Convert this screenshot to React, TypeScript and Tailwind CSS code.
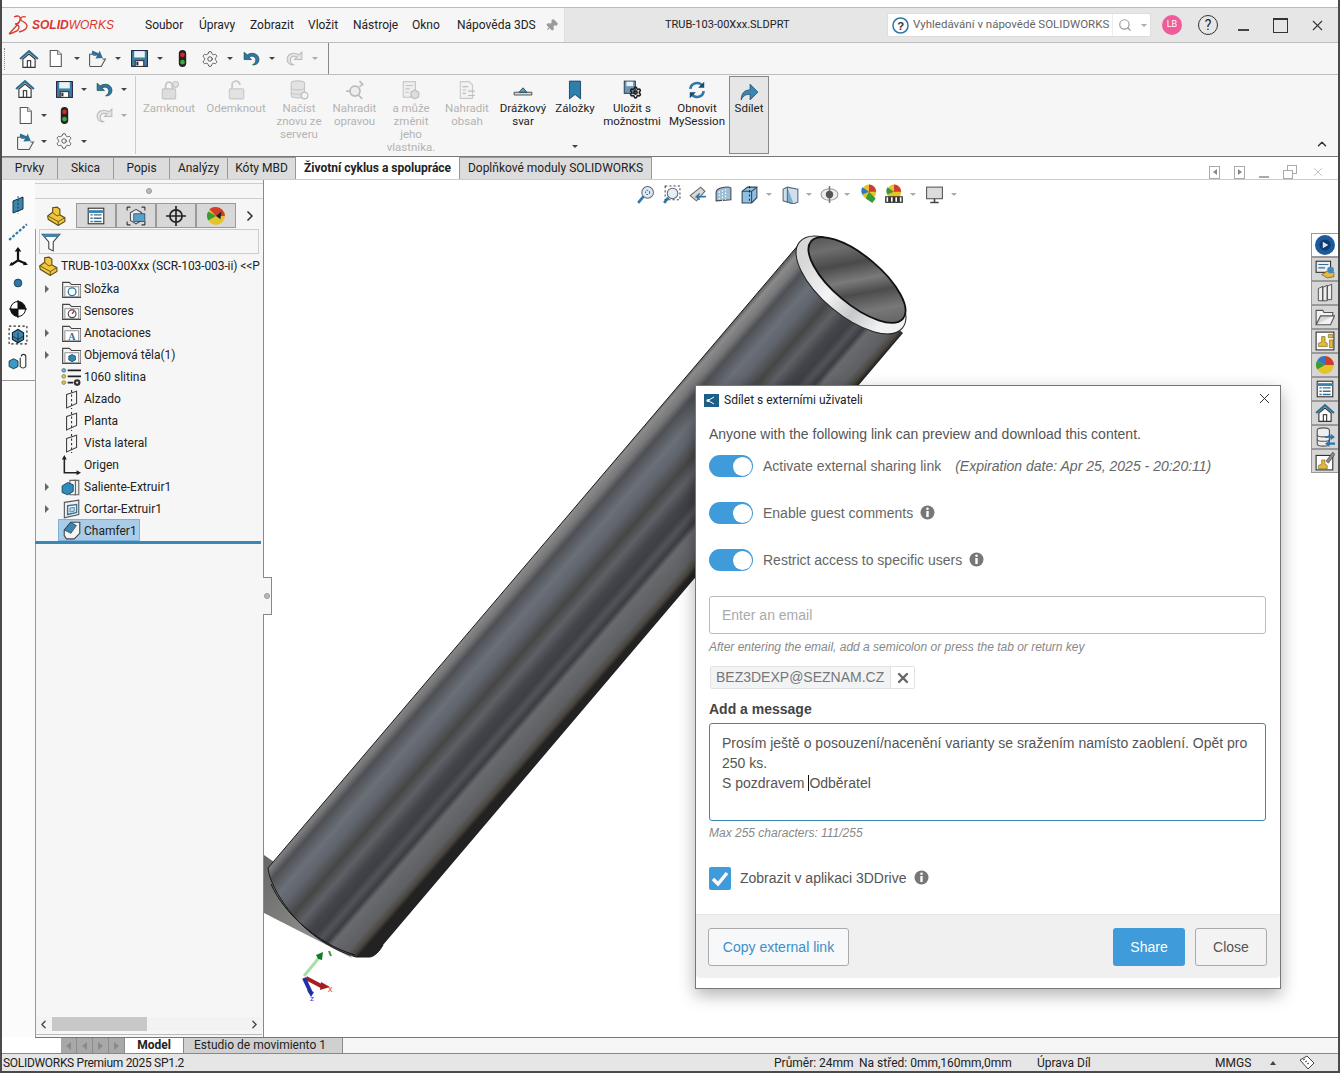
import { Settings, Search, X, ChevronUp, ChevronLeft, ChevronRight, Pin } from "lucide-react"
import type { ReactNode } from "react"

const menu = [
  { t: "Soubor", w: "w-[54px]" },
  { t: "Úpravy", w: "w-[51px]" },
  { t: "Zobrazit", w: "w-[58px]" },
  { t: "Vložit", w: "w-[45px]" },
  { t: "Nástroje", w: "w-[59px]" },
  { t: "Okno", w: "w-[45px]" },
  { t: "Nápověda 3DS", w: "w-[88px]" },
]

function Caret({ light }: { light?: boolean }) {
  return <span className={`w-0 h-0 border-x-[3px] border-t-[3px] border-x-transparent ${light ? "border-t-[#aaa]" : "border-t-[#444]"}`} />
}

function Svg({ s = 18, children }: { s?: number; children: ReactNode }) {
  return <svg width={s} height={s} viewBox="0 0 18 18" className="shrink-0">{children}</svg>
}

const HomeIcon = () => (
  <Svg s={20}>
    <path d="M1 9 9 2l8 7" fill="none" stroke="#2b6f8f" strokeWidth="2" />
    <path d="M3.5 9v7.5h11V9L9 4.5z" fill="#fff" stroke="#333" />
    <rect x="7.5" y="10.5" width="3" height="6" fill="#fff" stroke="#333" />
  </Svg>
)
const DocIcon = () => (
  <Svg s={19}>
    <path d="M4 1.5h7l3.5 3.5v11.5H4z" fill="#fff" stroke="#555" />
    <path d="M11 1.5V5h3.5" fill="#eee" stroke="#777" />
  </Svg>
)
const OpenIcon = () => (
  <Svg s={19}>
    <path d="M1.5 16V5h3l1 1h2M1.5 16.5h11l4-7h-3" fill="#f4f4f4" stroke="#555" />
    <path d="M4 1.5 10 4l1-2.5 3 7-7 .5 1.5-2.5-5-2z" fill="#2a6f96" />
  </Svg>
)
const SaveIcon = () => (
  <Svg s={19}>
    <rect x="1.5" y="1.5" width="15" height="15" fill="#3f7fa6" stroke="#224" />
    <rect x="4" y="2" width="10" height="6" fill="#e8f2f8" />
    <rect x="5" y="11" width="8" height="5.5" fill="#fff" stroke="#333" />
    <rect x="6" y="12" width="2" height="3.5" fill="#333" />
  </Svg>
)
const TrafficIcon = () => (
  <Svg s={19}>
    <rect x="5.5" y="1" width="7" height="16" rx="3.5" fill="#222" />
    <circle cx="9" cy="5.5" r="2.2" fill="#d8252a" />
    <circle cx="9" cy="12.5" r="2.2" fill="#3faa35" />
  </Svg>
)
const GearIcon = () => <Settings size={18} strokeWidth={1} color="#333" />
const UndoIcon = () => (
  <Svg s={19}>
    <path d="M2 3v7h7L6.500 7.500c3-1.500 6-.5 6.500 2.500.3 2-1 4-3 5 4 .5 6.500-2.500 6-6-.6-4.500-6-6.500-11-3.500z" fill="#2f77a8" stroke="#143" strokeWidth=".6" />
  </Svg>
)
const RedoIcon = () => (
  <Svg s={19}>
    <path d="M16 3v7H9l2.500-2.500c-3-1.500-6-.5-6.500 2.500-.3 2 1 4 3 5-4 .5-6.500-2.500-6-6 .6-4.500 6-6.500 11-3.500z" fill="#e4e4e4" stroke="#bbb" />
  </Svg>
)

const PlaneIcon = () => (
  <Svg s={20}>
    <path d="M5 5l9-3v11l-9 4z" fill="none" stroke="#444" />
    <path d="M9.5 1v17" stroke="#333" strokeDasharray="2 2" />
  </Svg>
)
const FolderIcon = ({ children }: { children?: ReactNode }) => (
  <Svg s={20}>
    <path d="M1.500 16.500V3h6l2 2h8.500v11.500z" fill="#f4f4f4" stroke="#444" />
    <rect x="3.500" y="7" width="12.500" height="9" fill="#fff" stroke="#777" strokeWidth=".7" />
    {children}
  </Svg>
)
const PartIcon = ({ s = 20 }: { s?: number }) => (
  <Svg s={s}>
    <path d="M1.500 9 6 5.500v-4L10 1l2.500 2v5L17 10.500V14l-6 3.500L2 12z" fill="#f0c53f" stroke="#5f4d12" />
    <path d="M2 9l9 5v3.500M11 14l6-3.500M6 6l4 3 2.500-1.200" fill="none" stroke="#5f4d12" strokeWidth=".8" />
  </Svg>
)

const treeRows: { label: string; arrow?: boolean; icon: ReactNode }[] = [
  { label: "Složka", arrow: true, icon: <FolderIcon><circle cx="10" cy="11.500" r="3.500" fill="none" stroke="#2f77a8" strokeWidth="1.200" /></FolderIcon> },
  { label: "Sensores", icon: <FolderIcon><circle cx="10" cy="11.500" r="3.500" fill="#fff" stroke="#444" /><path d="M10 11.500l2-2.500" stroke="#c33" strokeWidth="1.300" /></FolderIcon> },
  { label: "Anotaciones", arrow: true, icon: <FolderIcon><text x="6.500" y="15" fontSize="9" fontWeight="700" fontFamily="Liberation Serif, serif" fill="#2f6f9a">A</text></FolderIcon> },
  { label: "Objemová těla(1)", arrow: true, icon: <FolderIcon><path d="M7 10l3-1.500 3 1.500v3.500L10 15l-3-1.500z" fill="#2f86b3" stroke="#134" strokeWidth=".6" /></FolderIcon> },
  {
    label: "1060 slitina",
    icon: (
      <Svg s={20}>
        <circle cx="2.500" cy="3" r="1.700" fill="#6cb1d8" stroke="#346" strokeWidth=".5" />
        <circle cx="2.500" cy="8.500" r="1.700" fill="#e8c33a" stroke="#553" strokeWidth=".5" />
        <circle cx="2.500" cy="14" r="1.700" fill="#e8c33a" stroke="#553" strokeWidth=".5" />
        <path d="M6 3h12M6 8.500h12M6 14h5" stroke="#222" strokeWidth="1.500" />
        <circle cx="14.500" cy="14" r="3" fill="#333" />
        <circle cx="14.500" cy="14" r="1" fill="#fff" />
      </Svg>
    ),
  },
  { label: "Alzado", icon: <PlaneIcon /> },
  { label: "Planta", icon: <PlaneIcon /> },
  { label: "Vista lateral", icon: <PlaneIcon /> },
  {
    label: "Origen",
    icon: (
      <Svg s={20}>
        <path d="M3 3v13h13" fill="none" stroke="#222" strokeWidth="1.400" />
        <path d="M3 0l-2.200 4h4.400zM18 16l-4-2.200v4.400z" fill="#222" />
      </Svg>
    ),
  },
  {
    label: "Saliente-Extruir1",
    arrow: true,
    icon: (
      <Svg s={20}>
        <path d="M12 3h4v13h-4z" fill="#eee" stroke="#666" />
        <path d="M8 3h5v13H8z" fill="#f4f4f4" stroke="#666" />
        <path d="M1 8l5-3 5 2v6l-5 3-5-2z" fill="#2f8dbd" stroke="#134" strokeWidth=".7" />
      </Svg>
    ),
  },
  {
    label: "Cortar-Extruir1",
    arrow: true,
    icon: (
      <Svg s={20}>
        <path d="M3 3l13-2v13L3 17z" fill="#eee" stroke="#555" />
        <path d="M6 6l8-1v7l-8 2z" fill="#fff" stroke="#2f77a8" strokeWidth="1.300" />
        <path d="M8 8l4-.5V11l-4 .8z" fill="#bcd7e8" stroke="#456" strokeWidth=".6" />
      </Svg>
    ),
  },
]

const cmdItems: { lines: string[]; w: string; on?: boolean; icon: ReactNode; caret?: boolean }[] = [
  {
    lines: ["Zamknout"], w: "w-[62px]",
    icon: <Svg s={20}><rect x="3" y="8" width="12" height="9" rx="1" fill="#ddd" stroke="#c4c4c4" /><path d="M6 8V5a3 3 0 0 1 6 0v3" fill="none" stroke="#c4c4c4" strokeWidth="1.600" /><circle cx="15" cy="4" r="2.600" fill="#e2e2e2" stroke="#c4c4c4" /></Svg>,
  },
  {
    lines: ["Odemknout"], w: "w-[72px]",
    icon: <Svg s={20}><rect x="3" y="8" width="13" height="9" rx="1" fill="#e2e2e2" stroke="#c9c9c9" /><path d="M5.500 8V4.500a3.500 3.500 0 0 1 7 0" fill="none" stroke="#c9c9c9" strokeWidth="1.600" /></Svg>,
  },
  {
    lines: ["Načíst", "znovu ze", "serveru"], w: "w-[54px]",
    icon: <Svg s={20}><path d="M2 3c0-3 12-3 12 0v11c0 3-12 3-12 0z" fill="#e2e2e2" stroke="#c6c6c6" /><path d="M2 7c0 2.500 12 2.500 12 0M2 11c0 2.500 12 2.500 12 0" fill="none" stroke="#c6c6c6" /><circle cx="14" cy="14" r="3" fill="#f4f4f4" stroke="#bbb" /></Svg>,
  },
  {
    lines: ["Nahradit", "opravou"], w: "w-[57px]",
    icon: <Svg s={20}><circle cx="9" cy="10" r="4.500" fill="#eee" stroke="#bbb" strokeWidth="1.600" /><path d="M12 13.500l3.500 3.500M1 10h3M13 1l3 3-3 2" fill="none" stroke="#bbb" strokeWidth="1.500" /></Svg>,
  },
  {
    lines: ["a může", "změnit", "jeho", "vlastníka."], w: "w-[56px]",
    icon: <Svg s={20}><rect x="2" y="1.500" width="11" height="14" fill="#eee" stroke="#c6c6c6" /><path d="M4 5h7M4 8h4M4 11h3" stroke="#c6c6c6" /><path d="M9 11l3.500-2 3.500 2v4l-3.500 2L9 15z" fill="#ddd" stroke="#bbb" /></Svg>,
  },
  {
    lines: ["Nahradit", "obsah"], w: "w-[56px]",
    icon: <Svg s={20}><path d="M3 1.500h8l3 3V16.500H3z" fill="#f2f2f2" stroke="#c9c9c9" /><path d="M5 6h5M5 9h3M5 12h3M10 10h6M16 14h-6" stroke="#bdbdbd" /></Svg>,
  },
  {
    lines: ["Drážkový", "svar"], w: "w-[56px]", on: true,
    icon: <Svg s={20}><path d="M1 11h16v2.500H1z" fill="#cfd8de" stroke="#444" strokeWidth=".8" /><path d="M5.500 11 9 7l3.500 4z" fill="#5ba0c8" stroke="#245" strokeWidth=".8" /></Svg>,
  },
  {
    lines: ["Záložky"], w: "w-[48px]", on: true, caret: true,
    icon: <Svg s={20}><path d="M4 1h10v16l-5-4-5 4z" fill="#2f7fae" stroke="#14455f" strokeWidth=".8" /></Svg>,
  },
  {
    lines: ["Uložit s", "možnostmi"], w: "w-[66px]", on: true,
    icon: (
      <span className="relative flex">
        <Svg s={20}><rect x="2" y="1" width="10" height="11" fill="#6d97b3" stroke="#234" strokeWidth=".8" /><rect x="4" y="1.500" width="6" height="4" fill="#e8f2f8" /></Svg>
        <span className="absolute left-[7px] top-[6px]"><Settings size={13} strokeWidth={3} color="#222" /></span>
      </span>
    ),
  },
  {
    lines: ["Obnovit", "MySession"], w: "w-[64px]", on: true,
    icon: <Svg s={20}><path d="M3 8a6 6 0 0 1 11-2.500M15 10a6 6 0 0 1-11 2.500" fill="none" stroke="#2f77a8" strokeWidth="2.400" /><path d="M15.500 1.500v5.500h-5.500zM2.500 16.500V11h5.500z" fill="#174d70" /></Svg>,
  },
]

const featureTabs = [
  <Svg s={20} key="a"><rect x="2" y="2" width="14" height="14" fill="#fff" stroke="#333" /><path d="M2 5h14" stroke="#3b80a8" strokeWidth="2.500" /><path d="M4 8h2M4 11h2M4 14h2M7 8h7M7 11h7M7 14h7" stroke="#3b6f8f" strokeWidth="1.300" /></Svg>,
  <Svg s={20} key="b"><path d="M1 1h3M14 1h3M1 17h3M14 17h3M1 1v3M17 1v3M1 17v-3M17 17v-3" stroke="#333" /><path d="M4 6l5-3 5 3v7l-5 3-5-3z" fill="#eee" stroke="#555" /><rect x="7" y="7" width="10" height="7" fill="#5ba0c8" stroke="#234" strokeWidth=".6" /></Svg>,
  <Svg s={20} key="c"><circle cx="9" cy="9" r="5.500" fill="none" stroke="#222" strokeWidth="1.500" /><path d="M9 0v18M0 9h18" stroke="#222" strokeWidth="1.500" /></Svg>,
  <Svg s={20} key="d"><circle cx="9" cy="9" r="8" fill="#e5c32b" /><path d="M9 9V1a8 8 0 0 1 8 8z" fill="#d23c2e" /><path d="M9 9 2 13a8 8 0 0 1 0-8z" fill="#3a9a3a" /><path d="M9 9 3 3a8 8 0 0 1 6-2z" fill="#d23c2e" /><path d="M9 9l5-4-1 7z" fill="#222" /></Svg>,
]

const leftStrip = [
  <Svg s={18} key="0"><path d="M4 5l10-4v12L4 17z" fill="#3b86ad" stroke="#134" /><path d="M9 0v18" stroke="#123" strokeWidth=".8" strokeDasharray="2 1.500" /></Svg>,
  <Svg s={20} key="1"><path d="M1 17 17 3" stroke="#2f77a8" strokeWidth="2" strokeDasharray="2.500 1.500" /></Svg>,
  <Svg s={20} key="2"><path d="M9 2v10M9 12l7 3M9 12l-6 4" stroke="#111" strokeWidth="2" /><path d="M9 0l-3 4h6zM18 16l-4.500.5 1.500-3.500zM1 17l2-3.500 2 2.500z" fill="#111" /></Svg>,
  <Svg s={14} key="3"><circle cx="9" cy="9" r="5" fill="#2f77a8" stroke="#134" /></Svg>,
  <Svg s={18} key="4"><circle cx="9" cy="9" r="7.500" fill="#fff" stroke="#111" /><path d="M9 1.500a7.500 7.500 0 0 1 7.500 7.500H9zM9 16.500A7.500 7.500 0 0 1 1.500 9H9z" fill="#111" /><path d="M9 0v18M0 9h18" stroke="#111" /></Svg>,
  <Svg s={20} key="5"><path d="M4 7l5-3 5 3v6l-5 3-5-3z" fill="#3b86ad" stroke="#123" /><path d="M4 10l5 3 5-3M9 7v9" stroke="#123" fill="none" strokeWidth=".7" /><rect x="1" y="1" width="16" height="16" fill="none" stroke="#222" strokeDasharray="2 2" /></Svg>,
  <Svg s={20} key="6"><path d="M1 9l4-2 4 2v5l-4 2-4-2z" fill="#3b9ac8" stroke="#134" strokeWidth=".8" /><path d="M12 5a2 2 0 0 1 4 0v9a3 3 0 0 1-5 0V6" fill="none" stroke="#333" /></Svg>,
]

const taskPane = [
  <Svg s={20} key="0"><circle cx="9" cy="9" r="9" fill="#1d5a9c" /><circle cx="9" cy="9" r="5" fill="#0f3a70" /><path d="M7 6l5 3-5 3z" fill="#d5e8fa" /></Svg>,
  <Svg s={20} key="1"><rect x="1" y="2" width="13" height="10" fill="#eee" stroke="#333" /><path d="M3 5h9M3 8h6" stroke="#2f6f9a" /><path d="M6 14l5-3 6 1v4l-6 1z" fill="#e8b93a" stroke="#553" strokeWidth=".6" /><circle cx="14" cy="10" r="3" fill="#3b8ac0" /></Svg>,
  <Svg s={20} key="2"><path d="M3 5l4-2v13H3zM7 4l4-2v14H7zM11 3l4-2v14h-4z" fill="#eee" stroke="#444" strokeWidth=".8" /></Svg>,
  <Svg s={20} key="3"><path d="M1 16V3h6l1 2h8v3M1 16h13l3.500-8H5z" fill="#f2f2f2" stroke="#555" /></Svg>,
  <Svg s={20} key="4"><rect x="1" y="1" width="16" height="16" fill="#fff" stroke="#333" /><path d="M3 11l3-1V5h3v5l2 1v3H3z" fill="#eab82e" stroke="#553" strokeWidth=".5" /><path d="M12 3h4v3h-4zM13 8h3v7h-3z" fill="#eab82e" stroke="#553" strokeWidth=".5" /></Svg>,
  <Svg s={20} key="5"><circle cx="9" cy="9" r="8" fill="#e5c32b" /><path d="M9 9V1a8 8 0 0 1 8 8z" fill="#d23c2e" /><path d="M9 9 2 13a8 8 0 0 1 0-8z" fill="#3a9a3a" /><path d="M9 9 2 5a8 8 0 0 1 7-4z" fill="#2f77c8" /></Svg>,
  <Svg s={20} key="6"><rect x="2" y="2" width="14" height="14" fill="#fff" stroke="#333" /><path d="M2 5h14" stroke="#3b80a8" strokeWidth="2.500" /><path d="M4 8h2M4 11h2M4 14h2M7 8h7M7 11h7M7 14h7" stroke="#3b6f8f" strokeWidth="1.300" /></Svg>,
  <Svg s={20} key="7"><path d="M1 9 9 2l8 7" fill="none" stroke="#2b6f8f" strokeWidth="2" /><path d="M3.500 9v7.500h11V9L9 4.500z" fill="#fff" stroke="#333" /><rect x="7.500" y="10.500" width="3" height="6" fill="#fff" stroke="#333" /></Svg>,
  <Svg s={20} key="8"><path d="M2 3c0-3 11-3 11 0v12c0 3-11 3-11 0z" fill="#eee" stroke="#555" /><path d="M2 7c0 2.500 11 2.500 11 0M2 11c0 2.500 11 2.500 11 0" fill="none" stroke="#555" /><path d="M9 8h5V6l4 3-4 3v-2H9zM18 14h-5v-2l-4 3 4 3v-2h5z" fill="#2f77a8" /></Svg>,
  <Svg s={20} key="9"><rect x="1" y="4" width="15" height="13" fill="#fff" stroke="#333" /><path d="M3 13l3-1V8h3v4l2 1v3H3z" fill="#eab82e" stroke="#553" strokeWidth=".5" /><path d="M10 9l6-8 2 2-6 8z" fill="#888" stroke="#333" strokeWidth=".5" /></Svg>,
]

function Toggle({ label, children }: { label: string; children?: ReactNode }) {
  return (
    <div className="flex items-center h-[22px]">
      <span className="flex items-center justify-end w-[44px] h-[22px] rounded-full bg-[#3f9bd9] pr-[1px]">
        <span className="w-[19px] h-[19px] rounded-full bg-white" />
      </span>
      <span className="ml-[10px] text-[#666]">{label}</span>
      {children}
    </div>
  )
}

function Info({ className }: { className: string }) {
  return (
    <svg width="15" height="15" viewBox="0 0 15 15" className={className}>
      <circle cx="7.500" cy="7.500" r="7" fill="#777" />
      <circle cx="7.500" cy="3.800" r="1.300" fill="#fff" />
      <rect x="6.300" y="6" width="2.400" height="6" fill="#fff" />
    </svg>
  )
}

function Model() {
  return (
    <svg viewBox="264 180 1074 857" width="1074" height="857" className="absolute inset-0">
      <defs>
        <linearGradient id="pipe" gradientUnits="userSpaceOnUse" x1="800" y1="243" x2="903" y2="333">
          <stop offset="0" stopColor="#555" />
          <stop offset=".04" stopColor="#8b8b8b" />
          <stop offset=".1" stopColor="#77777a" />
          <stop offset=".15" stopColor="#4e5054" />
          <stop offset=".26" stopColor="#6a7078" />
          <stop offset=".34" stopColor="#60646c" />
          <stop offset=".44" stopColor="#464646" />
          <stop offset=".52" stopColor="#5e6066" />
          <stop offset=".6" stopColor="#44454b" />
          <stop offset=".66" stopColor="#3e3f45" />
          <stop offset=".71" stopColor="#505359" />
          <stop offset=".76" stopColor="#3c3d43" />
          <stop offset=".8" stopColor="#686a6e" />
          <stop offset=".92" stopColor="#5e5f62" />
          <stop offset=".97" stopColor="#4a463f" />
          <stop offset="1" stopColor="#222" />
        </linearGradient>
        <linearGradient id="inner" gradientUnits="userSpaceOnUse" x1="812" y1="243" x2="902" y2="317">
          <stop offset="0" stopColor="#484848" />
          <stop offset=".2" stopColor="#6e6e6e" />
          <stop offset=".35" stopColor="#4a4a4a" />
          <stop offset=".5" stopColor="#7a7a7a" />
          <stop offset=".62" stopColor="#4c4c4c" />
          <stop offset=".78" stopColor="#787878" />
          <stop offset="1" stopColor="#5a5a5a" />
        </linearGradient>
        <linearGradient id="rim" gradientUnits="userSpaceOnUse" x1="800" y1="300" x2="900" y2="300">
          <stop offset="0" stopColor="#d8d8d8" />
          <stop offset=".4" stopColor="#f4f4f4" />
          <stop offset=".7" stopColor="#c6c8ca" />
          <stop offset="1" stopColor="#f2f2f2" />
        </linearGradient>
        <linearGradient id="flat" x1="0" y1="0" x2="1" y2="1">
          <stop offset="0" stopColor="#666664" />
          <stop offset="1" stopColor="#a0a09e" />
        </linearGradient>
      </defs>
      <path d="M264 855 300 880 352 958 264 913z" fill="url(#flat)" />
      <path d="M800 243 268 868c1 12 10 28 22 44 18 22 42 38 66 45h14c5-1 9-5 13-12L903 333z" fill="url(#pipe)" />
      <path d="M800 243 268 868c1 12 10 28 22 44 18 22 42 38 66 45h14c5-1 9-5 13-12" fill="none" stroke="#1a1a1a" strokeWidth="1" />
      <path d="M271 884c12 28 46 60 84 71" fill="none" stroke="#111" strokeWidth="1" />
      <ellipse cx="851" cy="285" rx="67" ry="30" transform="rotate(40 851 285)" fill="url(#rim)" stroke="#222" strokeWidth="1" />
      <ellipse cx="857" cy="280" rx="60" ry="24" transform="rotate(40 857 280)" fill="url(#inner)" stroke="#111" strokeWidth="1.800" />
      <path d="M329 951l2 5" stroke="#3a9a3a" strokeWidth="2" />
      <path d="M304 976l14-17" stroke="#a5e0a5" strokeWidth="3" />
      <path d="M318 959l-2-4 7-3-1 8z" fill="#177a2a" />
      <path d="M306 978l17 9" stroke="#a51c22" strokeWidth="4" />
      <path d="M321 982l9 5-10 3z" fill="#a51c22" />
      <path d="M304 978l7 15" stroke="#1f2fa8" strokeWidth="4" />
      <path d="M307 990l7 2-3 5z" fill="#1f2fa8" />
      <text x="328" y="992" fontSize="9" fill="#e33" fontFamily="Liberation Sans, sans-serif">x</text>
      <text x="310" y="1001" fontSize="8" fill="#33c" fontFamily="Liberation Sans, sans-serif">z</text>
    </svg>
  )
}

function Dialog() {
  return (
    <div className="absolute z-20 left-[431px] top-[205px] w-[586px] h-[604px] bg-white border border-[#777] shadow-[0_6px_16px_rgba(0,0,0,0.3)] flex flex-col font-['Liberation_Sans',sans-serif] text-[14px] text-[#555]">
      <div className="flex items-center h-[28px] pl-[8px] pr-[7px] shrink-0">
        <svg width="15" height="13" viewBox="0 0 15 13" className="shrink-0">
          <rect width="15" height="13" fill="#1d5f86" />
          <path d="M4 6.500 10 3M4 6.500 10 10" stroke="#fff" fill="none" />
          <circle cx="4" cy="6.500" r="1.500" fill="#fff" />
        </svg>
        <span className="ml-[5px] text-[12px] text-[#222] font-['Roboto',sans-serif]">Sdílet s externími uživateli</span>
        <X size={17} strokeWidth={1.300} color="#222" className="ml-auto mb-[4px]" />
      </div>
      <div className="px-[13px] flex flex-col shrink-0">
        <div className="mt-[12px] leading-[16px]">Anyone with the following link can preview and download this content.</div>
        <div className="mt-[13px]">
          <Toggle label="Activate external sharing link">
            <span className="ml-[14px] italic text-[#666]">(Expiration date: Apr 25, 2025 - 20:20:11)</span>
          </Toggle>
        </div>
        <div className="mt-[25px]"><Toggle label="Enable guest comments"><Info className="ml-[7px] -mt-[2px]" /></Toggle></div>
        <div className="mt-[25px]"><Toggle label="Restrict access to specific users"><Info className="ml-[7px] -mt-[2px]" /></Toggle></div>
        <div className="mt-[25px] flex items-center h-[38px] w-[557px] border border-[#bbb] rounded-[3px] pl-[12px] text-[#aaa]">Enter an email</div>
        <div className="mt-[6px] text-[12px] italic text-[#888] leading-[14px]">After entering the email, add a semicolon or press the tab or return key</div>
        <div className="mt-[12px] flex w-[205px] ml-[1px] h-[23px] border border-[#e2e2e2] rounded-[2px]">
          <span className="flex items-center pl-[5px] w-[179px] bg-[#f1f3f5] text-[#777] whitespace-nowrap">BEZ3DEXP@SEZNAM.CZ</span>
          <span className="flex flex-1 items-center justify-center border-l border-[#e2e2e2]"><X size={16} strokeWidth={3.500} color="#666" /></span>
        </div>
        <div className="mt-[12px] font-bold text-[#444] leading-[16px]">Add a message</div>
        <div className="mt-[6px] w-[557px] h-[98px] border border-[#3a87b5] rounded-[3px] px-[12px] pt-[9px] leading-[20px]">
          Prosím ještě o posouzení/nacenění varianty se sražením namísto zaoblení. Opět pro 250 ks.
          <br />
          S pozdravem <span className="border-l border-[#111]">Odběratel</span>
        </div>
        <div className="mt-[5px] text-[12px] italic text-[#888] leading-[14px]">Max 255 characters: 111/255</div>
        <div className="mt-[27px] flex items-center h-[23px]">
          <span className="flex items-center justify-center w-[22px] h-[23px] bg-[#3f9bd9] rounded-[2px]">
            <svg width="18" height="16" viewBox="0 0 18 16"><path d="M2 8l5 5 9-11" fill="none" stroke="#fff" strokeWidth="3.500" /></svg>
          </span>
          <span className="ml-[9px]">Zobrazit v aplikaci 3DDrive</span>
          <Info className="ml-[7px] -mt-[2px]" />
        </div>
      </div>
      <div className="mt-[24px] h-[64px] pt-[1px] bg-[#f0f0f0] border-t border-[#e4e4e4] rounded-b-[4px] flex items-center pl-[12px] pr-[13px] shrink-0">
        <span className="flex items-center justify-center w-[141px] h-[38px] border border-[#aaa] rounded-[3px] bg-[#f6f8fa] text-[#3d8fc6]">Copy external link</span>
        <span className="ml-auto flex items-center justify-center w-[72px] h-[38px] rounded-[3px] bg-[#3f9bd9] text-white">Share</span>
        <span className="ml-[10px] flex items-center justify-center w-[72px] h-[38px] border border-[#aaa] rounded-[3px] bg-[#f3f3f3] text-[#555]">Close</span>
      </div>
    </div>
  )
}

export default function App() {
  return (
    <div className="relative flex flex-col w-[1340px] h-[1073px] overflow-hidden bg-white border-x-2 border-b-2 border-[#4a4a4a] font-['Roboto',sans-serif] text-[12px] text-[#222]">
      <div className="h-[8px] shrink-0 bg-white border-b border-[#bbb]" />

      {/* title bar */}
      <div className="flex h-[35px] shrink-0 border-b border-[#bdbdbd]">
        <div className="flex items-center w-[563px] bg-[#f6f6f6] border-r border-[#ddd] shrink-0">
          <svg width="24" height="22" viewBox="0 0 24 22" className="ml-[4px] shrink-0">
            <path d="M3 20 12 10M8 3c4-2 7-1 6 3-.6 3-3 4-5 4 4 0 5 3 3 6-2 2-6 3-9 4M20 3c-3-1-6 0-5 3 1 2 6 2 6 6 0 3-4 5-8 6" fill="none" stroke="#d8372e" strokeWidth="1.300" />
          </svg>
          <span className="ml-[2px] w-[113px] text-[12px] italic text-[#d8372e] font-['Liberation_Sans',sans-serif] shrink-0"><b>SOLID</b>WORKS</span>
          {menu.map((m) => <span key={m.t} className={`${m.w} shrink-0 whitespace-nowrap`}>{m.t}</span>)}
          <Pin size={13} fill="#999" color="#999" className="rotate-45 shrink-0" />
        </div>
        <div className="flex flex-1 items-center bg-[#e6e6e6]">
          <span className="ml-[100px] w-[222px] text-[11px]">TRUB-103-00Xxx.SLDPRT</span>
          <div className="flex items-center w-[264px] h-[24px] bg-white border border-[#ddd] rounded-[2px] text-[#666] text-[11.500px]">
            <svg width="17" height="17" viewBox="0 0 18 18" className="ml-[4px] shrink-0">
              <circle cx="9" cy="9" r="8" fill="#fff" stroke="#2f77a8" strokeWidth="1.600" />
              <text x="5.500" y="13.500" fontSize="12" fontWeight="700" fill="#333" fontFamily="Liberation Sans, sans-serif">?</text>
            </svg>
            <span className="ml-[4px] whitespace-nowrap">Vyhledávání v nápovědě SOLIDWORKS</span>
            <span className="ml-auto flex items-center h-full pl-[5px] border-l border-[#eee]"><Search size={14} color="#999" /></span>
            <span className="ml-[9px] mr-[3px] flex"><Caret light /></span>
          </div>
          <span className="ml-[11px] flex items-center justify-center w-[20px] h-[20px] rounded-full bg-[#ee5d9a] text-white text-[9px]">LB</span>
          <span className="ml-[16px] flex items-center justify-center w-[20px] h-[20px] rounded-full border border-[#333] text-[14px]">?</span>
          <span className="ml-[20px] w-[11px] h-[2px] mt-[10px] bg-[#444]" />
          <span className="ml-[24px] w-[15px] h-[15px] border border-[#333] border-t-2" />
          <X size={17} strokeWidth={1.500} color="#333" className="ml-[21px]" />
        </div>
      </div>

      {/* quick access */}
      <div className="flex h-[32px] shrink-0 border-b border-[#bdbdbd] bg-[#f6f6f6]">
        <div className="flex items-center w-[327px] border-r border-[#888] pl-[2px]">
          <span className="w-[2px] h-[22px] border-l border-dotted border-[#888]" />
          <span className="ml-[13px]"><HomeIcon /></span>
          <span className="ml-[7px]"><DocIcon /></span>
          <span className="ml-[9px] flex"><Caret /></span>
          <span className="ml-[8px]"><OpenIcon /></span>
          <span className="ml-[8px] flex"><Caret /></span>
          <span className="ml-[9px]"><SaveIcon /></span>
          <span className="ml-[8px] flex"><Caret /></span>
          <span className="ml-[10px]"><TrafficIcon /></span>
          <span className="ml-[9px] flex"><GearIcon /></span>
          <span className="ml-[8px] flex"><Caret /></span>
          <span className="ml-[9px]"><UndoIcon /></span>
          <span className="ml-[8px] flex"><Caret /></span>
          <span className="ml-[10px]"><RedoIcon /></span>
          <span className="ml-[8px] flex"><Caret light /></span>
        </div>
      </div>

      {/* command manager */}
      <div className="flex h-[82px] shrink-0 border-b border-[#777] bg-[#f6f6f6] leading-[13px]">
        <div className="grid grid-cols-[32px_6px_34px_6px_34px_6px] grid-rows-3 items-center justify-items-center w-[134px] h-[78px] my-[1px] pl-[7px] border-r border-[#ccc] shrink-0">
          <HomeIcon /><span /><SaveIcon /><Caret /><UndoIcon /><Caret />
          <DocIcon /><Caret /><TrafficIcon /><span /><RedoIcon /><Caret light />
          <OpenIcon /><Caret /><GearIcon /><Caret /><span /><span />
        </div>
        <div className="w-[2px] shrink-0" />
        {cmdItems.map((c) => (
          <div key={c.lines[0] + c.lines.length} className={`relative flex flex-col items-center pt-[5px] ${c.w} shrink-0 text-[11.500px] ${c.on ? "text-[#222]" : "text-[#b4b4b4]"}`}>
            <div className="flex items-center h-[20px] mb-[2px]">{c.icon}</div>
            {c.lines.map((l) => <span key={l} className="whitespace-nowrap">{l}</span>)}
            {c.caret && <span className="absolute bottom-[8px] flex"><Caret /></span>}
          </div>
        ))}
        <div className="flex flex-col items-center w-[40px] h-[78px] mt-[1px] pt-[4px] bg-[#e6e6e6] border border-[#888] text-[11.500px] shrink-0">
          <svg width="20" height="20" viewBox="0 0 18 18" className="mb-[1px]">
            <path d="M2 17c0-6 3-9 8-9V3l7 7-7 7v-5c-4 0-6 1-8 5z" fill="#3b86b5" stroke="#14455f" strokeWidth=".7" />
          </svg>
          Sdílet
        </div>
        <div className="flex flex-1 items-end justify-end pr-[9px] pb-[5px]"><ChevronUp size={14} strokeWidth={2.500} color="#333" /></div>
      </div>

      {/* tabs */}
      <div className="flex h-[23px] shrink-0 bg-white border-b border-[#ccc]">
        {[["Prvky", "w-[56px]"], ["Skica", "w-[56px]"], ["Popis", "w-[56px]"], ["Analýzy", "w-[58px]"], ["Kóty MBD", "w-[68px]"]].map(([t, w]) => (
          <span key={t} className={`flex items-center justify-center pb-[1px] ${w} bg-[#dcdcdc] border-r border-t border-[#999]`}>{t}</span>
        ))}
        <span className="flex items-center justify-center pb-[1px] w-[163px] font-bold bg-white">Životní cyklus a spolupráce</span>
        <span className="flex items-center justify-center pb-[1px] w-[193px] bg-[#dcdcdc] border-x border-t border-[#999]">Doplňkové moduly SOLIDWORKS</span>
      </div>

      {/* main */}
      <div className="flex flex-1 min-h-0">
        <div className="flex flex-col items-center w-[33px] shrink-0 bg-[#fbfbfb] pt-[12px]">
          {leftStrip.map((ic, i) => <span key={i} className="flex items-center justify-center h-[26px] mr-[1px]">{ic}</span>)}
          <span className="mt-[6px] w-full h-px bg-[#999]" />
        </div>

        <div className="relative flex flex-col w-[229px] shrink-0 bg-[#f6f6f6] border-r border-[#888]">
          <div className="h-[4px] border-b border-[#ccc] shrink-0" />
          <div className="flex items-center justify-center h-[15px] border-b border-[#ccc] shrink-0">
            <span className="w-[6px] h-[6px] rounded-full bg-[#bbb] border border-[#999]" />
          </div>
          <div className="flex h-[30px] pt-[4px] pb-[1px] pl-[1px] shrink-0">
            <span className="flex items-center justify-center w-[40px] bg-[#f6f6f6]"><PartIcon s={20} /></span>
            {featureTabs.map((ic, i) => (
              <span key={i} className="flex items-center justify-center w-[40px] bg-[#d8d8d8] border border-[#999]">{ic}</span>
            ))}
            <ChevronRight size={16} strokeWidth={2.500} color="#333" className="ml-[6px] mt-[5px]" />
          </div>
          <div className="flex flex-col flex-1 min-h-0 border-l border-[#999]">
            <div className="flex items-center ml-[3px] w-[220px] h-[25px] border border-[#ccc] bg-[#f6f6f6] shrink-0">
              <svg width="20" height="20" viewBox="0 0 18 18" className="ml-[1px]">
                <path d="M1 2h16l-6 7v8l-4-2V9z" fill="#fff" stroke="#444" />
                <path d="M1 2h16l-2 2.500H3z" fill="#3b86ad" />
              </svg>
            </div>
            <div className="flex items-center h-[24px] pl-[2px] shrink-0 whitespace-nowrap">
              <PartIcon s={20} />
              <span className="ml-[3px] tracking-[-0.1px]">TRUB-103-00Xxx (SCR-103-003-ii) &lt;&lt;P</span>
            </div>
            {treeRows.map((r) => (
              <div key={r.label} className="flex items-center h-[22px] shrink-0">
                <span className="flex justify-center w-[21px] shrink-0">
                  {r.arrow && <span className="w-0 h-0 border-y-[4px] border-l-[4px] border-y-transparent border-l-[#666]" />}
                </span>
                <span className="flex justify-center w-[27px] shrink-0">{r.icon}</span>
                <span className="whitespace-nowrap">{r.label}</span>
              </div>
            ))}
            <div className="flex items-center h-[22px] -mt-[1px] shrink-0">
              <div className="flex items-center ml-[22px] w-[82px] h-[22px] bg-[#a9cde9] border border-[#7fb2d9]">
                <span className="flex justify-center w-[25px] shrink-0">
                  <Svg s={20}>
                    <path d="M2 9l6-7h8v10l-5 5H4L2 14z" fill="#f4f4f4" stroke="#444" />
                    <path d="M2 9l6-7 5 3-5 7z" fill="#3b86ad" stroke="#234" strokeWidth=".6" />
                  </Svg>
                </span>
                <span className="pt-[1px]">Chamfer1</span>
              </div>
            </div>
            <div className="h-[3px] bg-[#3a87b5] w-[226px] -ml-[1px] shrink-0" />
            <div className="flex-1" />
            <div className="flex items-center h-[14px] w-[226px] shrink-0 bg-[#f3f3f3]">
              <ChevronLeft size={13} strokeWidth={2.500} color="#444" className="ml-[1px]" />
              <span className="ml-[2px] w-[95px] h-[14px] bg-[#c8c8c8]" />
              <ChevronRight size={13} strokeWidth={2.500} color="#444" className="ml-auto mr-[1px]" />
            </div>
            <div className="h-[4px] border-b border-[#bbb] shrink-0 w-[226px]" />
            <div className="h-[2px] shrink-0" />
          </div>
          <span className="absolute z-10 left-full top-[397px] flex items-center justify-center w-[9px] h-[38px] bg-[#f6f6f6] border border-l-0 border-[#888]">
            <span className="w-[6px] h-[6px] rounded-full bg-[#bbb] border border-[#999]" />
          </span>
        </div>

        <div className="relative flex-1 min-w-0 bg-white">
          <Model />
          <div className="absolute top-[6px] left-[372px] flex items-center h-[16px] gap-[7px]">
            <Svg s={19}><circle cx="11" cy="7" r="5.500" fill="#dcecf7" stroke="#667" /><path d="M7 11l-5 6" stroke="#2f77a8" strokeWidth="2.500" /><circle cx="11" cy="7" r="2" fill="none" stroke="#667" strokeDasharray="1.500 1" /></Svg>
            <Svg s={19}><circle cx="10" cy="8" r="5" fill="#e4f0f8" stroke="#667" /><path d="M6 12l-4 5" stroke="#2f77a8" strokeWidth="2.500" /><rect x="3" y="1" width="14" height="13" fill="none" stroke="#444" strokeDasharray="2 2" /></Svg>
            <Svg s={19}><path d="M2 10 12 2l4 4-8 9z" fill="#d8d8d8" stroke="#666" /><path d="M17 11H8l3-3M8 11l3 3" stroke="#2f77a8" strokeWidth="1.500" fill="none" /></Svg>
            <Svg s={19}><path d="M2 15V7c0-5 12-6 14-4v11z" fill="#9cbfd6" stroke="#445" /><path d="M5 6v9M8 5v10M11 4v10" stroke="#fff" strokeDasharray="1.500 1.500" /></Svg>
            <Svg s={19}><path d="M2 6l5-4h9v10l-5 5H2z" fill="#8fc0e0" stroke="#345" /><path d="M2 6h9v11M11 6l5-4" stroke="#345" fill="none" /><path d="M9 1v16" stroke="#222" strokeDasharray="2 2" /></Svg>
            <span className="flex"><Caret light /></span>
            <span className="ml-[2px]"><Svg s={19}><path d="M2 4l4-2 10 2v12l-4 2-10-3z" fill="#cfe0ec" stroke="#567" /><path d="M6 2v14l6 2" fill="#7fb0d0" stroke="#567" /></Svg></span>
            <span className="-ml-[1px] flex"><Caret light /></span>
            <span className="ml-[1px]"><Svg s={19}><ellipse cx="9" cy="9" rx="8" ry="5.500" fill="#eee" stroke="#999" /><path d="M9 1v16" stroke="#777" strokeWidth="1.500" /><circle cx="9" cy="9" r="3.500" fill="#555" /></Svg></span>
            <span className="-ml-[2px] flex"><Caret light /></span>
            <span className="ml-[2px]"><Svg s={20}><circle cx="9" cy="7" r="6.500" fill="#e5c32b" /><path d="M9 7V.5a6.500 6.500 0 0 1 6.500 6.500z" fill="#d23c2e" /><path d="M9 7 3 9.500A6.500 6.500 0 0 1 3 3z" fill="#2f77c8" /><path d="M9 7l-3 6 6 4 3-4z" fill="#3a9a3a" /></Svg></span>
            <span className="-ml-[2px]"><Svg s={20}><circle cx="9" cy="7" r="6.500" fill="#e5c32b" /><path d="M9 7V.5a6.500 6.500 0 0 1 6.500 6.500z" fill="#d23c2e" /><path d="M9 7 3 9.500A6.500 6.500 0 0 1 3 3z" fill="#3a9a3a" /><rect x="1" y="11" width="16" height="6" fill="#333" /><path d="M3 12v4M7 12v4M11 12v4M15 12v4" stroke="#fff" strokeWidth="1.500" /></Svg></span>
            <span className="-ml-[1px] flex"><Caret light /></span>
            <span className="ml-[2px]"><Svg s={19}><rect x="1.500" y="2" width="15" height="11" fill="#dcdcdc" stroke="#555" /><path d="M9 13v3M5 16.500h8" stroke="#444" strokeWidth="1.500" /></Svg></span>
            <span className="flex"><Caret light /></span>
          </div>
          <div className="absolute top-[-15px] right-[13px] flex items-center gap-[14px] text-[#aaa]">
            <span className="flex items-center justify-center w-[11px] h-[13px] border border-[#aaa]"><span className="w-0 h-0 border-y-[3px] border-r-[4px] border-y-transparent border-r-[#888]" /></span>
            <span className="flex items-center justify-center w-[11px] h-[13px] border border-[#aaa]"><span className="w-0 h-0 border-y-[3px] border-l-[4px] border-y-transparent border-l-[#888]" /></span>
            <span className="w-[10px] h-[2px] mt-[10px] bg-[#aaa]" />
            <span className="relative w-[14px] h-[14px]">
              <span className="absolute right-0 top-0 w-[10px] h-[9px] border border-[#aaa]" />
              <span className="absolute left-0 bottom-0 w-[10px] h-[9px] bg-white border border-[#aaa]" />
            </span>
            <X size={14} strokeWidth={1.200} color="#aaa" />
          </div>
          <div className="absolute right-0 top-[53px] flex flex-col w-[27px]">
            {taskPane.map((ic, i) => (
              <span key={i} className={`flex items-center justify-center h-[24px] border border-r-0 border-[#999] ${i === 0 ? "bg-white" : "bg-[#d6d6d6]"}`}>{ic}</span>
            ))}
          </div>
          <Dialog />
        </div>
      </div>

      {/* bottom tabs */}
      <div className="flex h-[16px] shrink-0 bg-white">
        <div className="w-[33px] shrink-0" />
        <div className="flex flex-1 border-t border-[#777] bg-[#f6f6f6]">
          <div className="w-[26px] bg-white shrink-0" />
          <div className="flex w-[64px] shrink-0">
            {["border-r-[5px] border-l-0", "border-r-[5px] border-l-0", "border-l-[5px] border-r-0", "border-l-[5px] border-r-0"].map((c, i) => (
              <span key={i} className="flex flex-1 items-center justify-center bg-[#a8a8a8] border-r border-[#8c8c8c]">
                <span className={`w-0 h-0 border-y-[4px] border-y-transparent border-x-[#8a8a8a] ${c}`} />
              </span>
            ))}
          </div>
          <span className="flex items-center justify-center pb-[2px] w-[58px] bg-white font-bold shrink-0">Model</span>
          <span className="flex items-center pb-[2px] pl-[10px] w-[160px] bg-[#d0d0d0] border-x border-[#888] shrink-0">Estudio de movimiento 1</span>
        </div>
      </div>

      {/* status */}
      <div className="flex items-center h-[18px] shrink-0 bg-[#e6e6e6] border-t border-[#888] whitespace-nowrap">
        <span className="ml-[1px] w-[771px] tracking-[-0.3px]">SOLIDWORKS Premium 2025 SP1.2</span>
        <span className="w-[85px]">Průměr: 24mm</span>
        <span className="w-[178px]">Na střed: 0mm,160mm,0mm</span>
        <span className="w-[178px]">Úprava Díl</span>
        <span className="w-[55px]">MMGS</span>
        <span className="w-0 h-0 border-x-[3px] border-b-[4px] border-x-transparent border-b-[#444]" />
        <span className="ml-[22px]">
          <Svg s={18}><path d="M2 6l7-4 7 7-6 6z" fill="#fff" stroke="#444" /><path d="M5 6l2-1M7 8l2-1M9 10l2-1" stroke="#444" /></Svg>
        </span>
      </div>
    </div>
  )
}
